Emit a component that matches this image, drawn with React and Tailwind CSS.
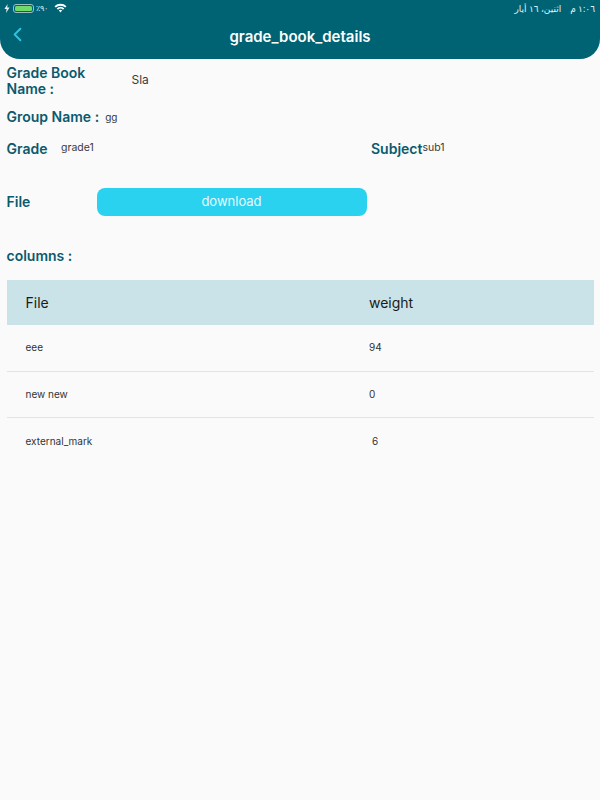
import React from "react";
import { ChevronLeft } from "lucide-react";

const font = { fontFamily: "Inter, 'Noto Sans', sans-serif" };

function StatusBar() {
  return (
    <div className="h-[16px] flex items-center justify-between pl-[4px] pr-[5px] text-[#e6f0f2]">
      <div className="flex items-center">
        <svg width="6" height="9" viewBox="0 0 6 9" className="mr-[3px]"><path d="M3.6 0 L0.4 5 H2.6 L2 9 L5.6 3.6 H3.2 Z" fill="#e6f0f2" /></svg>
        <div className="relative w-[21px] h-[9px] rounded-[3px] border border-[#9fbcc3] p-[1px] flex">
          <div className="flex-1 bg-[#6fdc6a] rounded-[1.5px]" />
        </div>
        <span className="text-[8px] ml-[2px] leading-none" style={{ fontFamily: "'Noto Sans', sans-serif" }}>٪٩٠</span>
        <svg width="13" height="10" viewBox="0 0 13 10" className="ml-[6px]">
          <path d="M0.5 3.2 A8.5 8.5 0 0 1 12.5 3.2 L11.2 4.6 A6.6 6.6 0 0 0 1.8 4.6 Z" fill="#fff" />
          <path d="M2.7 5.4 A5.4 5.4 0 0 1 10.3 5.4 L9 6.8 A3.6 3.6 0 0 0 4 6.8 Z" fill="#fff" />
          <path d="M4.9 7.6 A2.3 2.3 0 0 1 8.1 7.6 L6.5 9.4 Z" fill="#fff" />
        </svg>
      </div>
      <div className="text-[9px] leading-none flex gap-[9px]" dir="rtl" style={{ fontFamily: "'Noto Sans', 'DejaVu Sans', sans-serif" }}>
        <span>١:٠٦ م</span>
        <span>اثنين، ١٦ أيار</span>
      </div>
    </div>
  );
}

function Header() {
  return (
    <div className="h-[59px] bg-[#006374] rounded-b-[20px] flex flex-col">
      <StatusBar />
      <div className="relative flex-1 flex items-center justify-center pb-[2px]">
        <ChevronLeft className="absolute left-[6px] top-[7px] text-[#29c3e6]" size={23} strokeWidth={2} />
        <span className="text-white text-[15px] font-semibold leading-none">grade_book_details</span>
      </div>
    </div>
  );
}

const labelCls = "text-[#0a5a6e] text-[14px] font-semibold leading-[16px]";
const valueCls = "text-[#3a3a3a] leading-none";

function Row({ cells, border }) {
  return (
    <div className={`h-[46.5px] flex items-center text-[10px] text-[#333] ${border ? "border-b border-[#e4e4e4]" : ""}`}>
      <span className="w-[362.5px] pl-[19px]">{cells[0]}</span>
      <span className={cells[1] === "6" ? "pl-[3px]" : ""}>{cells[1]}</span>
    </div>
  );
}

export default function App() {
  return (
    <div className="w-[600px] h-[800px] bg-[#fafafa] flex flex-col" style={font}>
      <Header />
      <div className="flex flex-col px-[6.5px]">
        <div className="flex items-center mt-[6px] h-[32px]">
          <div className={`${labelCls} w-[125px]`}>Grade Book<br />Name :</div>
          <span className={`${valueCls} text-[12px] relative -top-[1px]`}>Sla</span>
        </div>
        <div className="flex items-center mt-[10px] h-[20px]">
          <span className={labelCls}>Group Name :</span>
          <span className={`${valueCls} text-[10px] ml-[6px]`}>gg</span>
        </div>
        <div className="flex items-center mt-[12px] h-[20px]">
          <span className={`${labelCls} w-[54.5px]`}>Grade</span>
          <span className={`${valueCls} text-[10.5px] w-[310px] relative -top-[1px]`}>grade1</span>
          <span className={labelCls}>Subject</span>
          <span className={`${valueCls} text-[10.5px] relative -top-[1px]`}>sub1</span>
        </div>
        <div className="flex items-center mt-[29px] h-[28px]">
          <span className={`${labelCls} w-[90px]`}>File</span>
          <div className="w-[270px] h-[28px] rounded-[8px] bg-[#2bd2f0] flex items-center justify-center text-[#e8f8fc] text-[13px]">download</div>
        </div>
        <div className="mt-[32px] h-[16px] flex items-center">
          <span className={labelCls}>columns :</span>
        </div>
        <div className="mt-[16px] w-[587px]">
          <div className="h-[45px] bg-[#c9e3e9] flex items-center text-[14px] text-[#1a1a1a]">
            <span className="w-[362.5px] pl-[19px]">File</span>
            <span>weight</span>
          </div>
          <Row cells={["eee", "94"]} border />
          <Row cells={["new new", "0"]} border />
          <Row cells={["external_mark", "6"]} />
        </div>
      </div>
    </div>
  );
}
